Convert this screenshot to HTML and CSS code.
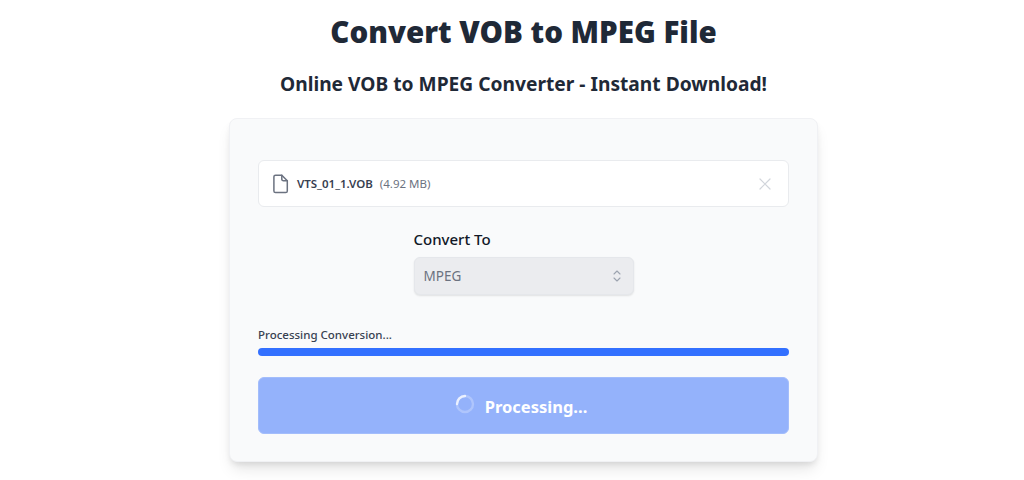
FILE: index.html
```html
<!DOCTYPE html>
<html lang="en">
<head>
    <meta charset="UTF-8">
    <title>Convert VOB to MPEG File</title>
    <link rel="stylesheet" href="styles.css">
</head>
<body>
    <main class="page">
        <h1 class="title">Convert VOB to MPEG File</h1>
        <h2 class="subtitle">Online VOB to MPEG Converter - Instant Download!</h2>

        <section class="card">
            <!-- Selected file -->
            <div class="file-row">
                <svg class="file-icon" width="18" height="20" viewBox="0 0 18 20" fill="none" stroke="#6b7280" stroke-width="1.5" stroke-linejoin="round" stroke-linecap="round">
                    <path d="M3.5 1.2h6.3l5.5 5.6v10.1a1.6 1.6 0 0 1-1.6 1.6H3.5a1.6 1.6 0 0 1-1.6-1.6V2.8a1.6 1.6 0 0 1 1.6-1.6z"/>
                    <path d="M9.8 1.2v4a1.6 1.6 0 0 0 1.6 1.6h3.9"/>
                </svg>
                <span class="file-name">VTS_01_1.VOB</span>
                <span class="file-size">(4.92 MB)</span>
                <svg class="file-remove" width="12" height="12" viewBox="0 0 12 12" fill="none" stroke="#d1d5db" stroke-width="1.2" stroke-linecap="round">
                    <path d="M1 1l10 10M11 1L1 11"/>
                </svg>
            </div>

            <!-- Output format -->
            <div class="format">
                <label class="format-label">Convert To</label>
                <div class="select">
                    <span>MPEG</span>
                    <svg width="10" height="14" viewBox="0 0 10 14" fill="none" stroke="#9ca3af" stroke-width="1.1" stroke-linecap="round" stroke-linejoin="round">
                        <path d="M2 5l3-3 3 3M2 9l3 3 3-3"/>
                    </svg>
                </div>
            </div>

            <!-- Progress -->
            <div class="progress">
                <p class="progress-label">Processing Conversion...</p>
                <div class="progress-bar"></div>
            </div>

            <button class="submit" disabled>
                <svg class="spinner" width="20" height="20" viewBox="0 0 20 20" fill="none" stroke-width="2.4">
                    <circle cx="10" cy="10" r="8" stroke="#fff" stroke-opacity="0.25"/>
                    <path d="M2 10a8 8 0 0 1 8-8" stroke="#fff" stroke-opacity="0.75" stroke-linecap="round"/>
                </svg>
                <span class="submit-text">Processing...</span>
            </button>
        </section>
    </main>
</body>
</html>
```

FILE: styles.css
```css
html, body {
    height: 100%;
}

body {
    margin: 0;
    background: #fff;
    color: #1f2937;
    font-family: "Noto Sans", "Open Sans", sans-serif;
    overflow: hidden;
}

.page {
    box-sizing: border-box;
    display: flex;
    flex-direction: column;
    align-items: center;
    height: 100%;
    padding: 12px 0 0 23px;
}

.title {
    margin: 0;
    font-size: 29.5px;
    line-height: 40px;
    font-weight: 900;
}

.subtitle {
    margin: 18px 0 0;
    font-size: 19.2px;
    line-height: 28px;
    font-weight: 700;
}

.card {
    box-sizing: border-box;
    flex-shrink: 0;
    width: 589px;
    margin-top: 20px;
    padding: 41px 28px 27px;
    background: #f9fafb;
    border: 1px solid #f0f1f4;
    border-radius: 8px;
    box-shadow: 0 10px 15px -3px rgba(0, 0, 0, 0.1), 0 4px 6px -2px rgba(0, 0, 0, 0.1);
}

/* File row */
.file-row {
    display: flex;
    align-items: center;
    height: 47px;
    box-sizing: border-box;
    padding: 0 17px 0 13px;
    background: #fff;
    border: 1px solid #e9ebee;
    border-radius: 6px;
}

.file-icon {
    margin-right: 7px;
}

.file-name {
    font-size: 11.5px;
    font-weight: 600;
    color: #374151;
}

.file-size {
    margin-left: 7px;
    font-size: 11.5px;
    color: #6b7280;
}

.file-remove {
    margin-left: auto;
}

/* Format select */
.format {
    width: 220px;
    margin: 22px auto 0;
}

.format-label {
    display: block;
    font-size: 15px;
    line-height: 20px;
    font-weight: 500;
    color: #111827;
}

.select {
    display: flex;
    align-items: center;
    justify-content: space-between;
    box-sizing: border-box;
    height: 38px;
    margin-top: 8px;
    padding: 0 11px 0 9px;
    background: #ebecef;
    border: 1px solid #e5e7eb;
    border-radius: 6px;
    box-shadow: 0 1px 2px rgba(0, 0, 0, 0.1);
    font-size: 13.5px;
    color: #6b7280;
}

/* Progress */
.progress {
    margin-top: 31px;
}

.progress-label {
    margin: 0;
    font-size: 11.5px;
    line-height: 18px;
    font-weight: 500;
    color: #374151;
}

.progress-bar {
    height: 8px;
    margin-top: 4px;
    background: #3370ff;
    border-radius: 4px;
}

.submit {
    display: flex;
    align-items: center;
    justify-content: center;
    gap: 10px;
    width: 100%;
    height: 57px;
    margin-top: 21px;
    padding: 0 5px 0 0;
    background: #94b2fb;
    border: 1px solid #a3bdfb;
    border-radius: 6px;
    color: #fff;
    font-family: inherit;
    font-size: 16.5px;
    font-weight: 700;
}

.submit-text {
    padding-top: 2px;
}

.spinner {
    margin-top: -4px;
}
```
